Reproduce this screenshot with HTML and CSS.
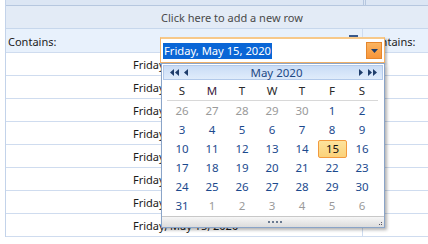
FILE: index.html
```html
<!DOCTYPE html>
<html>
<head>
<meta charset="utf-8">
<link rel="stylesheet" href="styles.css">
</head>
<body>
<div class="grid">
  <div class="row hdr"><div class="c1"></div><div class="c2"></div></div>
  <div class="row add"><div class="addtext">Click here to add a new row</div></div>
  <div class="row filter"><div class="c1"><span>Contains:</span><span class="ficon"></span></div><div class="c2"><span>Contains:</span></div></div>
  <div class="row data"><div class="c1"><span class="val">Friday, May 15, 2020</span></div><div class="c2"></div></div>
  <div class="row data"><div class="c1"><span class="val">Friday, May 15, 2020</span></div><div class="c2"></div></div>
  <div class="row data"><div class="c1"><span class="val">Friday, May 15, 2020</span></div><div class="c2"></div></div>
  <div class="row data"><div class="c1"><span class="val">Friday, May 15, 2020</span></div><div class="c2"></div></div>
  <div class="row data"><div class="c1"><span class="val">Friday, May 15, 2020</span></div><div class="c2"></div></div>
  <div class="row data"><div class="c1"><span class="val">Friday, May 15, 2020</span></div><div class="c2"></div></div>
  <div class="row data"><div class="c1"><span class="val">Friday, May 15, 2020</span></div><div class="c2"></div></div>
  <div class="row data"><div class="c1"><span class="val">Friday, May 15, 2020</span></div><div class="c2"></div></div>
</div>

<div class="popup">
  <div class="editor">
    <div class="input"><span class="sel">Friday, May 15, 2020</span></div>
    <div class="ddbtn"><svg width="7" height="4" viewBox="0 0 7 4"><path d="M0 0H7L3.5 4Z" fill="#1f3d6b"/></svg></div>
  </div>
  <div class="cal">
    <div class="calhead">
      <div class="navs">
        <svg width="9" height="7" viewBox="0 0 9 7"><path d="M4 0V7L0 3.5Z M9 0V7L5 3.5Z" fill="#1f3d6b"/></svg>
        <svg width="4" height="7" viewBox="0 0 4 7"><path d="M4 0V7L0 3.5Z" fill="#1f3d6b"/></svg>
      </div>
      <div class="title">May 2020</div>
      <div class="navs">
        <svg width="4" height="7" viewBox="0 0 4 7"><path d="M0 0V7L4 3.5Z" fill="#1f3d6b"/></svg>
        <svg width="9" height="7" viewBox="0 0 9 7"><path d="M0 0V7L4 3.5Z M5 0V7L9 3.5Z" fill="#1f3d6b"/></svg>
      </div>
    </div>
    <div class="days">
      <div class="dn">S</div><div class="dn mo">M</div><div class="dn">T</div><div class="dn">W</div><div class="dn">T</div><div class="dn">F</div><div class="dn">S</div>
    </div>
    <div class="dates">
      <div class="o">26</div><div class="o">27</div><div class="o">28</div><div class="o">29</div><div class="o">30</div><div>1</div><div>2</div>
      <div>3</div><div>4</div><div>5</div><div>6</div><div>7</div><div>8</div><div>9</div>
      <div>10</div><div>11</div><div>12</div><div>13</div><div>14</div><div class="today">15</div><div>16</div>
      <div>17</div><div>18</div><div>19</div><div>20</div><div>21</div><div>22</div><div>23</div>
      <div>24</div><div>25</div><div>26</div><div>27</div><div>28</div><div>29</div><div>30</div>
      <div>31</div><div class="o">1</div><div class="o">2</div><div class="o">3</div><div class="o">4</div><div class="o">5</div><div class="o">6</div>
    </div>
    <div class="calfoot">
      <div class="dots"><i></i><i></i><i></i><i></i></div>
      <svg class="grip" width="4" height="4" viewBox="0 0 4 4"><rect x="2" y="0" width="1" height="1" fill="#556"/><rect x="0" y="2" width="1" height="1" fill="#556"/><rect x="2" y="2" width="1" height="1" fill="#556"/></svg>
    </div>
  </div>
</div>
</body>
</html>
```

FILE: styles.css
```css
* { box-sizing: border-box; }
body {
  margin: 0;
  width: 428px;
  height: 244px;
  overflow: hidden;
  background: #fff;
  font-family: "Noto Sans", "Open Sans", sans-serif;
  font-size: 11px;
  color: #222;
  position: relative;
}
.grid {
  display: flex;
  flex-direction: column;
  margin-left: 5px;
  border-left: 1px solid #c3d3ea;
}
.row {
  display: flex;
  border-bottom: 1px solid #cfdcef;
}
.c1 {
  width: 357px;
  border-right: 1px solid #cfdcef;
  display: flex;
  align-items: center;
}
.c2 {
  flex: 1;
  display: flex;
  align-items: center;
}
.hdr {
  height: 6px;
  background: #dce6f4;
  border-bottom: 1px solid #b6c7df;
}
.hdr .c1 { border-right: 3px double #b6c7df; width: 360px; }
.add {
  height: 23px;
  background: #e3ebf6;
  border-bottom: 1px solid #c7d7ec;
  align-items: center;
}
.addtext {
  padding-left: 155px;
  color: #4a4a4a;
}
.filter {
  height: 24px;
  background: #e8f1fc;
}
.filter .c1 { padding-left: 2px; padding-top: 1px; position: relative; }
.filter .c2 { padding-left: 4px; padding-top: 1px; }
.ficon {
  position: absolute;
  left: 343px;
  top: 6px;
  width: 9px;
  height: 8px;
  background: #3a5a8c;
}
.data { height: 23px; }
.data .c1 { padding-left: 127px; padding-top: 1px; }
.val { white-space: nowrap; color: #1a1a1a; }

.popup {
  position: absolute;
  left: 160px;
  top: 37px;
  width: 227px;
}
.editor {
  width: 225px;
  height: 26px;
  border: 1px solid #f3b36a;
  border-top: 2px solid #f7c98a;
  background: #fff;
  display: flex;
  align-items: center;
  padding: 2px;
  box-shadow: 2px 2px 2px rgba(0,0,0,0.25);
  gap: 4px;
}
.input {
  flex: 1;
  height: 17px;
  display: flex;
  align-items: center;
}
.sel {
  background: #0a66d6;
  color: #fff;
  padding: 0 1px;
  line-height: 16px;
  font-size: 11.2px;
}
.ddbtn {
  width: 16px;
  height: 17px;
  background: linear-gradient(#fbb460, #f7953a);
  border: 1px solid #e5862c;
  display: flex;
  align-items: center;
  justify-content: center;
  padding-top: 1px;
}
.cal {
  margin-left: 1px;
  width: 224px;
  height: 165px;
  border: 1px solid #8aa4c8;
  background: #fff;
  display: flex;
  flex-direction: column;
  box-shadow: 2px 2px 3px rgba(0,0,0,0.3);
}
.calhead {
  margin: 1px 1px 0 1px;
  height: 15px;
  background: linear-gradient(#c9dcf6, #e0ecfb);
  border: 1px solid #b2c9ea;
  display: flex;
  align-items: center;
  justify-content: space-between;
  padding: 0 5px 0 6px;
}
.navs { display: flex; gap: 5px; align-items: center; width: 22px; }
.calhead .navs:last-child { justify-content: flex-end; }
.title {
  color: #1f4a86;
  font-size: 11.5px;
  line-height: 13px;
  padding-left: 6px;
}
.days {
  margin: 3px 6px 0 5px;
  display: grid;
  grid-template-columns: repeat(7, 30px);
  border-bottom: 1px solid #d8d8d8;
  height: 18px;
}
.dn {
  text-align: center;
  color: #2a2a2a;
  line-height: 16px;
  font-size: 11.5px;
}
.dn.mo { color: #3a2040; }
.dates {
  margin: 0 6px 0 5px;
  display: grid;
  grid-template-columns: repeat(7, 30px);
  grid-auto-rows: 19px;
}
.dates div {
  text-align: center;
  line-height: 19px;
  color: #1c4a8e;
  font-size: 11.5px;
}
.dates .o { color: #9a9a9a; }
.dates .today {
  margin: 1px 0 0 1px;
  width: 29px;
  height: 18px;
  line-height: 16px;
  background: linear-gradient(#fde39d, #fbd27a);
  border: 1px solid #f29a3e;
  border-radius: 2px;
  color: #111;
}
.calfoot {
  margin-top: auto;
  height: 11px;
  background: linear-gradient(#f6f6f6, #dcdcdc);
  border-top: 1px solid #c8c8c8;
  position: relative;
  display: flex;
  justify-content: center;
  align-items: center;
}
.dots { display: flex; gap: 2px; padding-left: 3px; }
.dots i { width: 2px; height: 2px; background: #6a7a90; display: block; }
.grip { position: absolute; right: 1px; bottom: 1px; }
```
